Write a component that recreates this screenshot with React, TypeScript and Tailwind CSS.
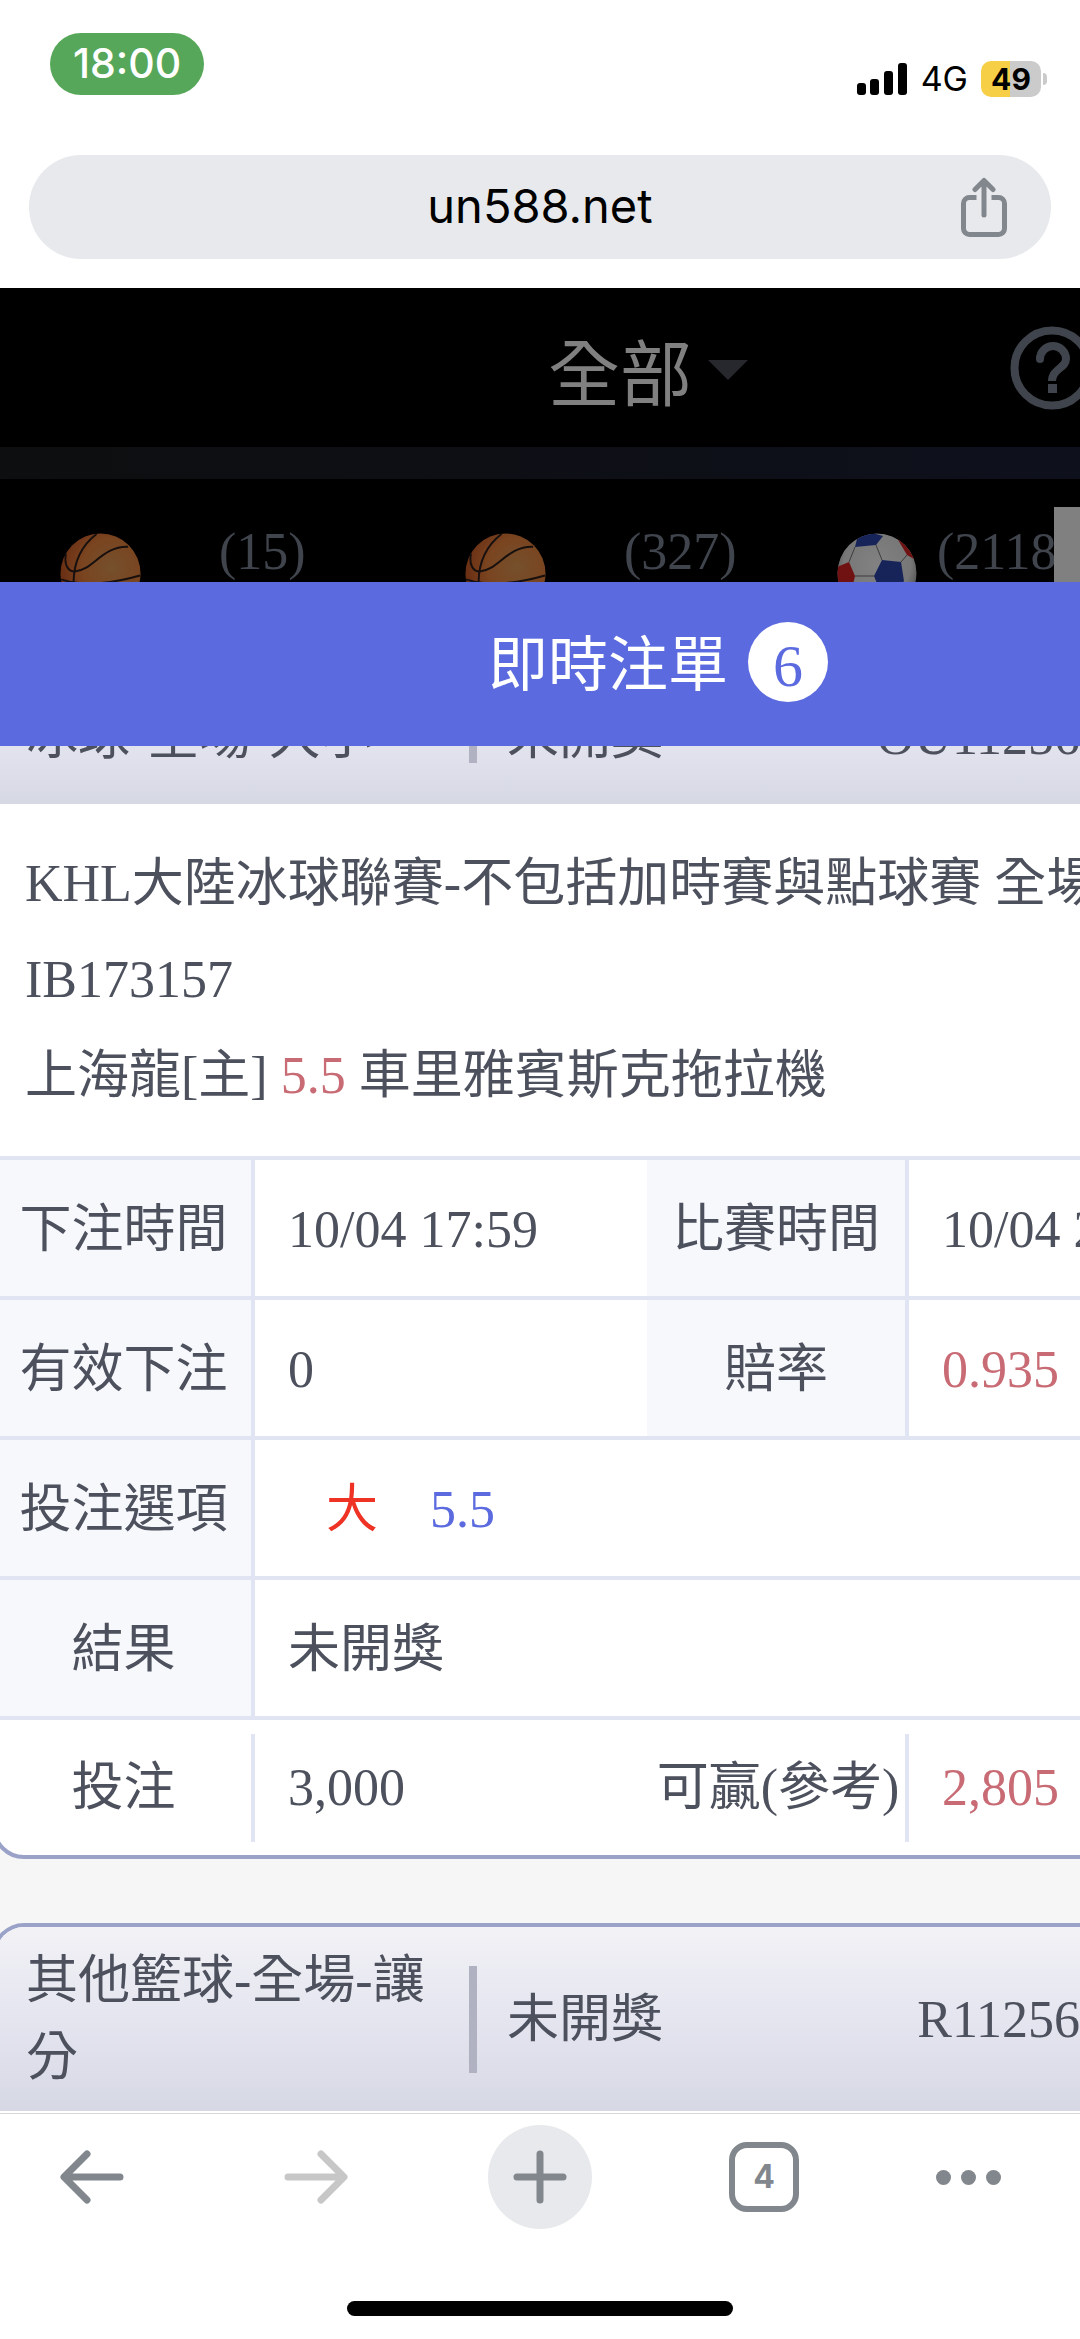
import React from "react";

function ShareIcon() {
  return (
    <svg className="h-[60px] w-12" viewBox="0 0 48 60" fill="none" stroke="#81878c" strokeWidth="5">
      <path d="M16.500 20.500h-7a6 6 0 0 0-6 6v25a6 6 0 0 0 6 6h29a6 6 0 0 0 6-6v-25a6 6 0 0 0-6-6h-7" />
      <path d="M24 38V4M15 12.500L24 3.500l9 9" strokeLinecap="round" strokeLinejoin="round" />
    </svg>
  );
}

function Basketball() {
  return (
    <svg className="size-[81px] shrink-0" viewBox="0 0 82 82">
      <defs>
        <radialGradient id="basket" cx="0.640" cy="0.420" r="0.620">
          <stop offset="0" stopColor="#75502c" />
          <stop offset="0.600" stopColor="#7a4420" />
          <stop offset="1" stopColor="#6b3014" />
        </radialGradient>
      </defs>
      <circle cx="41" cy="41" r="40.500" fill="url(#basket)" />
      <g fill="none" stroke="#17100e" strokeWidth="2">
        <path d="M37 1C20 14 12 32 14 58" />
        <path d="M6 21c-2 11 2 18 9 18 18-1 28-26 54-25" />
        <path d="M1 47c24 8 56 3 80-4" />
      </g>
    </svg>
  );
}

function SoccerBall() {
  return (
    <svg className="size-20 shrink-0" viewBox="0 0 80 80">
      <defs>
        <radialGradient id="soccer" cx="0.500" cy="0.400" r="0.600">
          <stop offset="0" stopColor="#828282" />
          <stop offset="0.700" stopColor="#777777" />
          <stop offset="1" stopColor="#454545" />
        </radialGradient>
        <clipPath id="ball">
          <circle cx="40" cy="40" r="39.500" />
        </clipPath>
      </defs>
      <g clipPath="url(#ball)">
        <circle cx="40" cy="40" r="40" fill="url(#soccer)" />
        <path d="M18 14l2-8L32-1l14 4-7 9z" fill="#17245a" />
        <path d="M45 27l19 2 3 19-10 12-14-2-6-15z" fill="#17245a" />
        <path d="M60 5l14 9 3 12-7-4z" fill="#701212" />
        <path d="M0 34l12-5 6 14-3 13L0 58z" fill="#701212" />
        <path
          d="M18 14l-6 15M39 12l6 15M64 29l6-7M18 43h19"
          fill="none"
          stroke="#3c3c3c"
          strokeWidth="1"
        />
      </g>
    </svg>
  );
}

function StatusBar() {
  return (
    <div className="flex h-[155px] items-start justify-between pl-[50px] pr-[33px] pt-[33px]">
      <div className="flex h-[62px] w-[154px] items-center justify-center rounded-full bg-[#57a75a] text-[41px] font-medium text-white">
        18:00
      </div>
      <div className="flex h-[92px] items-center text-black">
        <svg className="h-8 w-[50px]" viewBox="0 0 50 32">
          <rect x="0" y="20" width="9" height="12" rx="3" />
          <rect x="13" y="16" width="9" height="16" rx="3" />
          <rect x="27" y="8" width="9" height="24" rx="3" />
          <rect x="41" y="0" width="9" height="32" rx="3" />
        </svg>
        <span className="ml-[14px] text-[34px] leading-9">4G</span>
        <span className="ml-[13px] flex h-9 w-[60px] items-center justify-center rounded-[10px] bg-[linear-gradient(90deg,#f7cf47_49%,#cbcbcb_49%)] text-[30px] font-bold">
          49
        </span>
        <span className="ml-0.5 h-3 w-1 rounded-r-full bg-[#cbcbcb]" />
      </div>
    </div>
  );
}

function Site() {
  return (
    <div className="bg-black text-[#40444d]">
      <div className="flex h-[159px] items-center overflow-hidden">
        <div className="w-[216px]" />
        <div className="flex-1" />
        <button className="flex items-center gap-4 pt-4 text-[72px] leading-[80px] text-[#808080]">
          全部
          <svg className="mb-3 h-5 w-10" viewBox="0 0 40 20" fill="#27282d">
            <path d="M0 0h40L20 20z" />
          </svg>
        </button>
        <div className="flex-1">
          <button className="-mr-[14px] ml-auto block size-[84px]" aria-label="說明">
            <svg viewBox="0 0 84 84" fill="none" stroke="#40444d" strokeWidth="8">
              <circle cx="42" cy="42" r="37.500" />
              <path d="M30 33a13 13 0 0 1 26 0c0 9-14 10-14 22" strokeLinejoin="round" />
              <circle cx="30" cy="33" r="4" fill="#40444d" stroke="none" />
              <path d="M42.500 58v9" strokeWidth="9" />
            </svg>
          </button>
        </div>
      </div>
      <div className="h-8 bg-linear-to-r from-[#0d0e0f] to-[#0e101c]" />
      <div className="flex h-[103px] items-start overflow-hidden pl-[60px] text-[52px] leading-[58px]">
        <div className="flex w-[405px] shrink-0 items-start gap-[78px] pt-[54px]">
          <Basketball />
          <span className="-mt-[10px]">(15)</span>
        </div>
        <div className="flex w-[372px] shrink-0 items-start gap-[78px] pt-[54px]">
          <Basketball />
          <span className="-mt-[10px]">(327)</span>
        </div>
        <div className="flex min-w-0 flex-1 items-start gap-5 overflow-hidden pt-[54px]">
          <SoccerBall />
          <span className="-mt-[10px]">(2118)</span>
        </div>
        <div className="mt-7 h-[75px] w-[26px] shrink-0 bg-[#808080]" />
      </div>
    </div>
  );
}

type SlipHeaderProps = { name: string; id: string; height: string; bar: string };

function SlipHeader({ name, id, height, bar }: SlipHeaderProps) {
  return (
    <div
      className={`flex items-center bg-linear-to-b from-[#f2f2f6] via-[#e4e5ef] to-[#d6d8e4] pl-[30px] pr-1 leading-[77px] ${height}`}
    >
      <div className="w-[416px] shrink-0">{name}</div>
      <div className={`ml-[27px] w-2 shrink-0 bg-[#b0b2c1] ${bar}`} />
      <div className="ml-[30px]">未開獎</div>
      <div className="ml-auto">{id}</div>
    </div>
  );
}

const label = "border-r-4 border-t-4 border-[#e0e4f3] bg-[#f7f8fc] pt-[3px] text-center font-normal";
const cell = "h-[140px] border-t-4 border-[#e0e4f3] pl-[33px] pt-[3px]";

function BetTable() {
  return (
    <table className="w-full table-fixed border-separate border-spacing-0 whitespace-nowrap">
      <colgroup>
        <col className="w-[259px]" />
        <col className="w-[392px]" />
        <col className="w-[262px]" />
        <col />
      </colgroup>
      <tbody>
        <tr>
          <th className={label}>下注時間</th>
          <td className={cell}>10/04 17:59</td>
          <th className={label}>比賽時間</th>
          <td className={cell}>10/04 2</td>
        </tr>
        <tr>
          <th className={label}>有效下注</th>
          <td className={cell}>0</td>
          <th className={label}>賠率</th>
          <td className={cell}>
            <span className="text-[#c86b74]">0.935</span>
          </td>
        </tr>
        <tr>
          <th className={label}>投注選項</th>
          <td className={cell} colSpan={3}>
            <span className="ml-[38px] text-[#ee3224]">大</span>
            <span className="ml-[52px] text-[#5b6bdf]">5.5</span>
          </td>
        </tr>
        <tr>
          <th className={label}>結果</th>
          <td className={cell} colSpan={3}>
            未開獎
          </td>
        </tr>
      </tbody>
    </table>
  );
}

function BetTotals() {
  return (
    <div className="flex h-[139px] items-center whitespace-nowrap border-t-4 border-[#e0e4f3] leading-[108px]">
      <div className="w-[259px] shrink-0 border-r-4 border-[#e0e4f3] text-center">投注</div>
      <div className="w-[392px] shrink-0 pl-[33px]">3,000</div>
      <div className="w-[262px] shrink-0 border-r-4 border-[#e0e4f3] pl-1 text-center">可贏(參考)</div>
      <div className="pl-[33px] text-[#c86b74]">2,805</div>
    </div>
  );
}

function Toolbar() {
  return (
    <nav className="border-t border-[#d8d8d8] bg-white">
      <div className="flex justify-between px-10 pt-[11px] text-[#81878c]">
        <button className="flex size-[104px] items-center justify-center" aria-label="返回">
          <svg className="h-14 w-16" viewBox="0 0 64 56" fill="none" stroke="currentColor" strokeWidth="7" strokeLinecap="round" strokeLinejoin="round">
            <path d="M60 28H5M27 5L4 28l23 23" />
          </svg>
        </button>
        <button className="flex size-[104px] items-center justify-center text-[#c7c7c7]" aria-label="前進">
          <svg className="h-14 w-16" viewBox="0 0 64 56" fill="none" stroke="currentColor" strokeWidth="7" strokeLinecap="round" strokeLinejoin="round">
            <path d="M4 28h55M37 5l23 23-23 23" />
          </svg>
        </button>
        <button className="flex size-[104px] items-center justify-center rounded-full bg-[#e8e9ec]" aria-label="新分頁">
          <svg className="size-[54px]" viewBox="0 0 54 54" fill="none" stroke="currentColor" strokeWidth="7" strokeLinecap="round">
            <path d="M27 4v46M4 27h46" />
          </svg>
        </button>
        <button className="flex size-[104px] items-center justify-center" aria-label="分頁">
          <span className="flex size-[70px] items-center justify-center rounded-[18px] border-[6px] border-current text-[32px] font-bold">
            4
          </span>
        </button>
        <button className="flex size-[104px] items-center gap-2.5" aria-label="更多">
          <span className="size-[15px] rounded-full bg-current" />
          <span className="size-[15px] rounded-full bg-current" />
          <span className="size-[15px] rounded-full bg-current" />
        </button>
      </div>
      <div className="mx-auto mb-[23px] mt-[72px] h-[15px] w-[386px] rounded-full bg-black" />
    </nav>
  );
}

export default function App() {
  return (
    <div className="flex min-h-screen w-full flex-col overflow-hidden bg-white font-['Inter','Noto_Sans_CJK_TC',sans-serif]">
      <StatusBar />
      <div className="mx-[29px] mb-[29px] flex h-[104px] items-center rounded-full bg-[#e8e9ed] pr-[43px]">
        <div className="w-[91px]" />
        <div className="flex-1 pb-0.5 text-center text-[47px] text-black">un588.net</div>
        <button className="flex w-12 justify-center" aria-label="分享">
          <ShareIcon />
        </button>
      </div>

      <div className="flex flex-1 flex-col font-['Liberation_Serif','Noto_Sans_CJK_TC',serif]">
        <Site />

        {/* Live bet slips sheet */}
        <div className="relative z-10 flex h-[164px] items-center justify-center gap-5 bg-[#5b6bdf] pb-1 pl-[236px] text-[60px] leading-[72px] text-white">
          <h1 className="pt-2">即時注單</h1>
          <span className="flex size-20 items-center justify-center rounded-full bg-white pt-2 text-[#5b6bdf]">
            6
          </span>
        </div>

        <div className="flex-1 overflow-hidden bg-[#f6f6f7] text-[52px] leading-[77px] text-[#4d515d]">
          {/* First slip, scrolled partly under the sheet title */}
          <section className="-mx-2 -mt-[82px] overflow-hidden rounded-l-[32px] border-4 border-[#9ba2c8] bg-white">
            <SlipHeader name="冰球-全場-大小" id="OU11256" height="h-[136px]" bar="h-[54px]" />
            <div className="whitespace-nowrap pb-8 pl-[29px] pt-8 leading-[96px]">
              <p>KHL大陸冰球聯賽-不包括加時賽與點球賽 全場</p>
              <p>IB173157</p>
              <p>
                上海龍[主] <span className="text-[#c86b74]">5.5</span> 車里雅賓斯克拖拉機
              </p>
            </div>
            <BetTable />
            <BetTotals />
          </section>

          <section className="-mx-2 mt-16 overflow-hidden rounded-tl-[32px] border-x-4 border-t-4 border-[#9ba2c8] bg-white pb-0.5">
            <SlipHeader name="其他籃球-全場-讓分" id="R11256" height="h-[184px]" bar="h-[107px]" />
          </section>
        </div>
      </div>

      <Toolbar />
    </div>
  );
}
